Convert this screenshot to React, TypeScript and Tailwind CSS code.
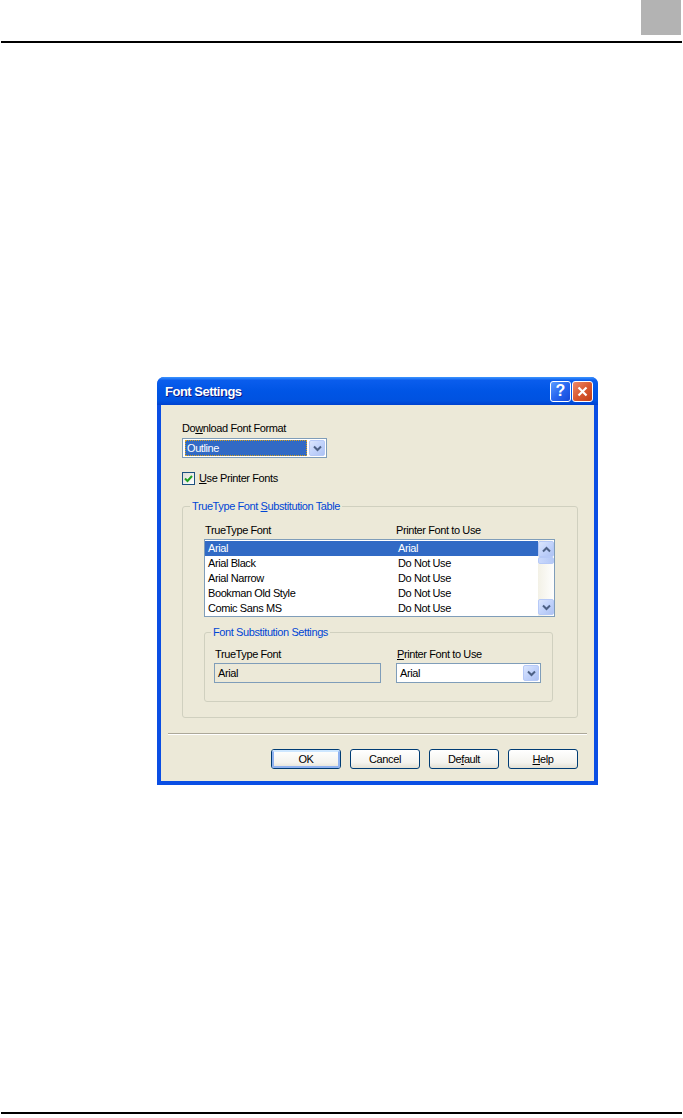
import React from 'react';

const rows: [string, string][] = [
  ['Arial', 'Arial'],
  ['Arial Black', 'Do Not Use'],
  ['Arial Narrow', 'Do Not Use'],
  ['Bookman Old Style', 'Do Not Use'],
  ['Comic Sans MS', 'Do Not Use'],
];

const Chevron: React.FC<{ up?: boolean }> = ({ up }) => (
  <svg width="9" height="7" viewBox="0 0 9 7">
    <path
      d={up ? 'M1 5.5 L4.5 2 L8 5.5' : 'M1 1.5 L4.5 5 L8 1.5'}
      fill="none"
      stroke="#4d6185"
      strokeWidth="2"
    />
  </svg>
);

const XpArrowButton: React.FC<{ up?: boolean; className?: string }> = ({ up, className = '' }) => (
  <div
    className={`flex items-center justify-center rounded-[2px] border border-[#b6c9f7] bg-[linear-gradient(135deg,#dbe6fd_0%,#c2d3fb_50%,#aec2f3_100%)] ${className}`}
  >
    <Chevron up={up} />
  </div>
);

const Combo: React.FC<{ value: string; focused?: boolean }> = ({ value, focused }) => (
  <div className="flex h-[20px] w-[145px] items-stretch border border-[#7f9db9] bg-white p-[1px]">
    <div className="flex flex-1 items-center pl-[1px] pr-[2px]">
      {focused ? (
        <div className="flex h-full w-full items-center border border-dotted border-[#d9a21a] bg-[#316ac5] pl-[1px] text-white">
          {value}
        </div>
      ) : (
        <span className="pl-[1px]">{value}</span>
      )}
    </div>
    <XpArrowButton className="w-[16px]" />
  </div>
);

const XpButton: React.FC<{ children: React.ReactNode; primary?: boolean }> = ({ children, primary }) => (
  <div className="h-[20px] w-[70px] rounded-[3px] border border-[#003c74] bg-[linear-gradient(180deg,#ffffff_0%,#f4f3ee_70%,#e3e0d4_100%)]">
    <div
      className={`flex h-full w-full items-center justify-center rounded-[2px] ${
        primary ? 'border-2 border-[#8fb2f0] border-t-[#cee7ff]' : ''
      }`}
    >
      {children}
    </div>
  </div>
);

export default function App() {
  return (
    <div className="flex h-[1118px] w-[683px] flex-col bg-white font-['Liberation_Sans',Arial,sans-serif] text-[11px] leading-[13px] tracking-[-0.4px] text-black">
      {/* page header */}
      <div className="flex h-[35px] justify-end pr-[2px]">
        <div className="h-[35px] w-[40px] bg-[#b3b3b3]" />
      </div>
      <div className="mx-[1px] mt-[6px] h-[2px] bg-black" />

      {/* dialog */}
      <div className="ml-[157px] mt-[334px] w-[441px] overflow-hidden rounded-t-[7px] bg-[#0a4ee4]">
        {/* title bar */}
        <div className="flex h-[28px] items-center justify-between bg-[linear-gradient(180deg,#3d95ff_0%,#0a5ded_12%,#0055e5_50%,#0052e0_85%,#0042cf_100%)] pl-[8px] pr-[5px]">
          <span className="pt-[1px] text-[13px] font-bold tracking-[-0.5px] text-white [text-shadow:1px_1px_#0a1883]">
            Font Settings
          </span>
          <div className="flex gap-[1px]">
            <div className="flex h-[21px] w-[21px] items-center justify-center rounded-[3px] border border-white bg-[linear-gradient(135deg,#5b9cff_0%,#2767f0_50%,#1448d8_100%)] text-[16px] font-bold leading-none tracking-normal text-white">
              ?
            </div>
            <div className="flex h-[21px] w-[21px] items-center justify-center rounded-[3px] border border-white bg-[linear-gradient(135deg,#ec8a6a_0%,#d95a32_50%,#c13e17_100%)]">
              <svg width="11" height="11" viewBox="0 0 11 11">
                <path d="M1.5 1.5 L9.5 9.5 M9.5 1.5 L1.5 9.5" stroke="white" strokeWidth="2.2" />
              </svg>
            </div>
          </div>
        </div>

        {/* body */}
        <div className="mx-[4px] mb-[4px] flex flex-col bg-[#ece9d8] pb-[12px]">
          <div className="pl-[21px]">
            <div className="mt-[17px]">
              Do<span className="underline">w</span>nload Font Format
            </div>
            <div className="mt-[3px]">
              <Combo value="Outline" focused />
            </div>
            <div className="mt-[14px] flex items-center gap-[4px]">
              <div className="flex h-[13px] w-[13px] items-center justify-center border border-[#1c5180] bg-[linear-gradient(135deg,#dcdcd7,#ffffff)]">
                <svg width="9" height="9" viewBox="0 0 9 9">
                  <path d="M1 4.5 L3.5 7 L8 2" fill="none" stroke="#21a121" strokeWidth="2" />
                </svg>
              </div>
              <span>
                <span className="underline">U</span>se Printer Fonts
              </span>
            </div>

            {/* substitution table group */}
            <fieldset className="mt-[15px] w-[396px] rounded-[3px] border border-[#d0d0bf] pb-[15px] pl-[21px]">
              <legend className="-ml-[14px] px-[2px] text-[#0046d5]">
                TrueType Font <span className="underline">S</span>ubstitution Table
              </legend>
              <div className="mt-[11px] flex">
                <span className="w-[192px] pl-[1px]">TrueType Font</span>
                <span>Printer Font to Use</span>
              </div>
              <div className="mt-[2px] flex h-[78px] w-[351px] border border-[#7f9db9] bg-white">
                <div className="flex-1 pt-[1px]">
                  {rows.map(([a, b], i) => (
                    <div
                      key={a}
                      className={`flex h-[15px] items-center pl-[3px] ${i === 0 ? 'bg-[#316ac5] text-white' : ''}`}
                    >
                      <span className="w-[190px]">{a}</span>
                      <span>{b}</span>
                    </div>
                  ))}
                </div>
                <div className="flex w-[16px] flex-col bg-[linear-gradient(90deg,#f3f1e6,#fefefe)] py-[1px]">
                  <XpArrowButton up className="h-[16px] w-[16px]" />
                  <div className="h-[7px] w-[16px] rounded-[2px] border border-[#b6c9f7] bg-[linear-gradient(90deg,#c9d8fc,#b4c8f6)]" />
                  <div className="flex-1" />
                  <XpArrowButton className="h-[16px] w-[16px]" />
                </div>
              </div>

              {/* inner settings group */}
              <fieldset className="mt-[9px] w-[349px] rounded-[3px] border border-[#d0d0bf] pb-[18px] pl-[9px]">
                <legend className="-ml-[3px] px-[2px] text-[#0046d5]">Font Substitution Settings</legend>
                <div className="mt-[9px] flex gap-[15px]">
                  <div className="flex flex-col gap-[2px]">
                    <span className="pl-[1px]">TrueType Font</span>
                    <div className="flex h-[20px] w-[167px] items-center border border-[#7f9db9] bg-[#ece9d8] pl-[3px]">
                      Arial
                    </div>
                  </div>
                  <div className="flex flex-col gap-[2px]">
                    <span className="pl-[1px]">
                      <span className="underline">P</span>rinter Font to Use
                    </span>
                    <Combo value="Arial" />
                  </div>
                </div>
              </fieldset>
            </fieldset>
          </div>

          {/* separator */}
          <div className="mx-[7px] mt-[15px] h-[2px] border-t border-b border-t-[#aca899] border-b-white" />

          <div className="mt-[14px] flex justify-end gap-[9px] pr-[16px]">
            <XpButton primary>OK</XpButton>
            <XpButton>Cancel</XpButton>
            <XpButton>
              De<span className="underline">f</span>ault
            </XpButton>
            <XpButton>
              <span className="underline">H</span>elp
            </XpButton>
          </div>
        </div>
      </div>

      {/* page footer */}
      <div className="mx-[1px] mb-[4px] mt-auto h-[2px] bg-black" />
    </div>
  );
}
